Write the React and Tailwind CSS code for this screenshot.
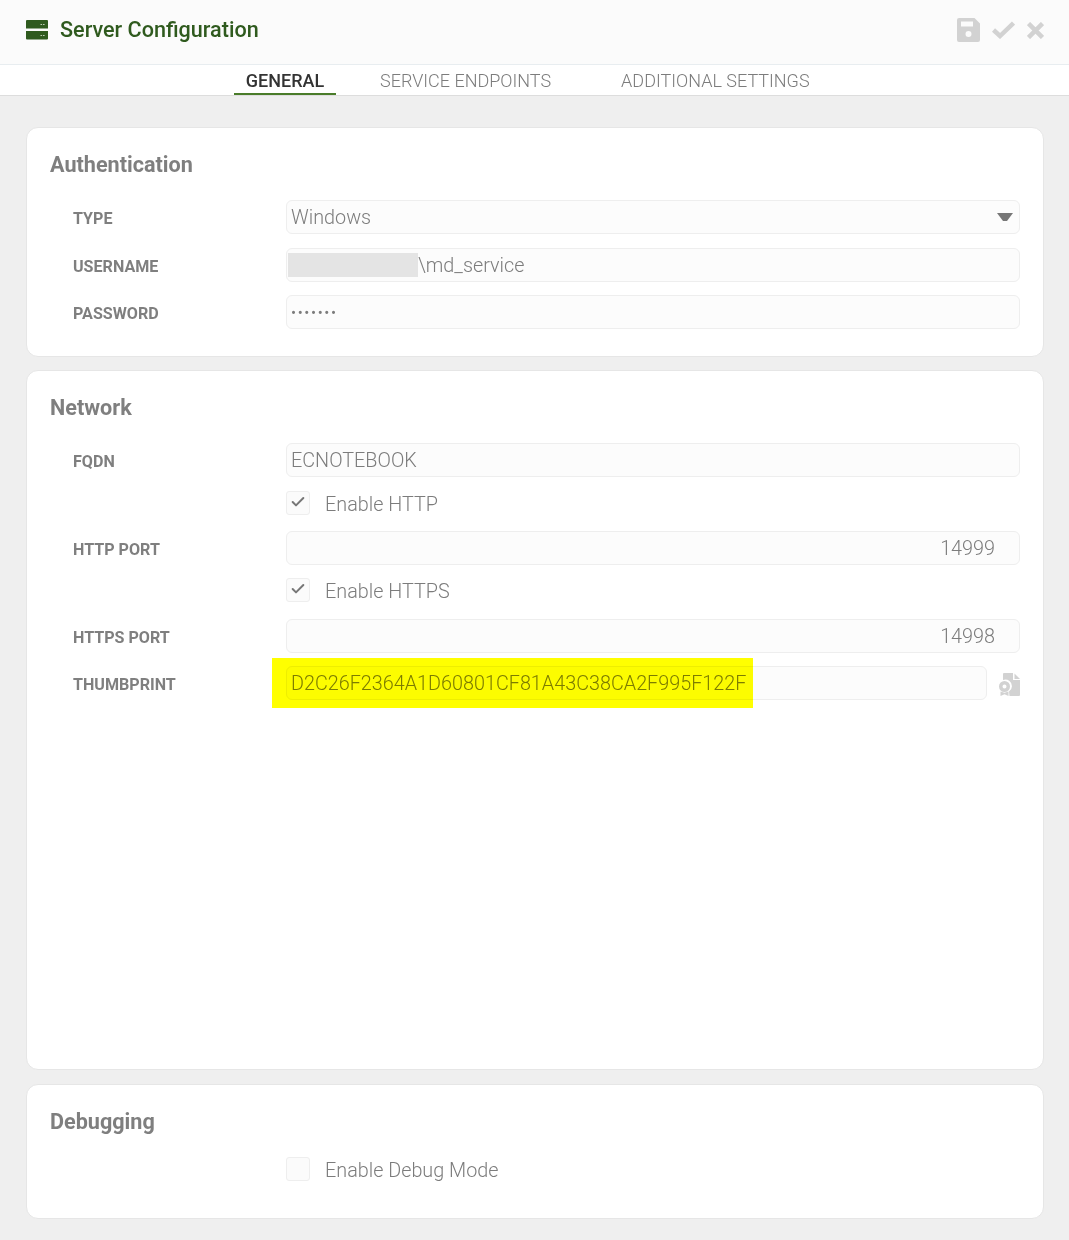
import React from "react";
import { Check } from "lucide-react";

function ServerIcon() {
  return (
    <svg width="22" height="20" viewBox="0 0 22 20" className="block">
      <path fill="#2f5a1e" d="M1 0h20a1 1 0 0 1 1 1v7.500H0V1a1 1 0 0 1 1-1zM0 11h22v7.500a1 1 0 0 1-1 1H1a1 1 0 0 1-1-1z" />
      <rect x="14.500" y="4" width="1.600" height="1" fill="#b9c9b0" />
      <rect x="17" y="4" width="1.600" height="1" fill="#b9c9b0" />
      <rect x="14.500" y="15" width="1.600" height="1" fill="#b9c9b0" />
      <rect x="17" y="15" width="1.600" height="1" fill="#b9c9b0" />
    </svg>
  );
}

function SaveIcon() {
  return (
    <svg width="23" height="24" viewBox="0 0 23 24" className="block">
      <path
        fill="#d2d2d2"
        fillRule="evenodd"
        d="M2 0h15.500L23 5.500V22a2 2 0 0 1-2 2H2a2 2 0 0 1-2-2V2a2 2 0 0 1 2-2zM4 3.500V8.500h12V3.500zM11.500 13a3 3 0 1 0 0 6 3 3 0 0 0 0-6z"
      />
    </svg>
  );
}

function OkIcon() {
  return (
    <svg width="23" height="18" viewBox="0 0 23 18" className="block">
      <path fill="none" stroke="#d2d2d2" strokeWidth="4.500" d="M1.500 9l6.500 6L21.500 2" />
    </svg>
  );
}

function CloseIcon() {
  return (
    <svg width="17" height="17" viewBox="0 0 17 17" className="block">
      <path fill="none" stroke="#d2d2d2" strokeWidth="4.500" d="M1.500 1.500l14 14M15.500 1.500l-14 14" />
    </svg>
  );
}

function CertIcon() {
  return (
    <svg width="22" height="23" viewBox="0 0 22 23" className="block">
      <path fill="#d2d2d2" d="M6 0h9v7h7v15a1 1 0 0 1-1 1H11.500l-.5-4.500a6.500 6.500 0 0 0 .5-10.500A7 7 0 0 0 5 7V1a1 1 0 0 1 1-1zM16.500 0.500L22 6h-5.500z" />
      <path fill="#d2d2d2" fillRule="evenodd" d="M6.500 8a5.500 5.500 0 1 1 0 11 5.500 5.500 0 0 1 0-11zm0 3.500a2 2 0 1 0 0 4 2 2 0 0 0 0-4zM2.500 18.500v4.500l4-1.800 4 1.800v-4.500l-4 1.300z" />
    </svg>
  );
}

function Field({ children, className = "" }) {
  return (
    <div className={`h-[34px] flex items-center px-[4px] pt-[2px] border border-[#eeeeee] rounded-[6px] bg-[#fcfcfc] text-[19.8px] font-light text-[#7c7c7c] ${className}`}>
      {children}
    </div>
  );
}

function Row({ label, children, className = "" }) {
  return (
    <div className={`flex items-center pl-[46px] pr-[23px] ${className}`}>
      <div className="w-[213px] shrink-0 text-[16.1px] font-bold text-[#7f7f7f] pt-[4px]">{label}</div>
      <div className="flex-1 min-w-0">{children}</div>
    </div>
  );
}

function CheckRow({ checked, label, className = "" }) {
  return (
    <div className={`h-[24px] flex items-center pl-[259px] ${className}`}>
      <div className="w-[24px] h-[24px] flex items-center justify-center rounded-[3px] border border-[#eeeeee] bg-[#fbfbfb]">
        {checked && <Check size={16} strokeWidth={3} className="text-[#777777] mb-[2px]" />}
      </div>
      <span className="ml-[15px] pt-[4px] text-[19.8px] font-light text-[#7c7c7c]">{label}</span>
    </div>
  );
}

function Card({ title, className = "", children }) {
  return (
    <section className={`bg-white border border-[#e6e6e6] rounded-[12px] ${className}`}>
      <h2 className="pl-[23px] pt-[22px] h-[72px] text-[21.6px] leading-[30px] font-bold text-[#7f7f7f]">{title}</h2>
      {children}
    </section>
  );
}

export default function App() {
  return (
    <div className="relative w-[1069px] h-[1240px] overflow-hidden bg-[#efefef] font-['Roboto',sans-serif]">
      <header className="h-[65px] flex items-center justify-between pl-[26px] pr-[25px] pb-[4px] bg-[#fbfbfb] border-b border-[#e8edf0]">
        <div className="flex items-center gap-[12px]">
          <ServerIcon />
          <span className="text-[21.6px] font-medium text-[#2f5a1e]">Server Configuration</span>
        </div>
        <div className="flex items-center">
          <SaveIcon />
          <div className="ml-[12px]"><OkIcon /></div>
          <div className="ml-[12px]"><CloseIcon /></div>
        </div>
      </header>

      <nav className="h-[31px] bg-white border-b border-[#dddddd] text-[18px] font-normal text-[#7c7c7c]">
        <div className="flex h-full pl-[234px]">
          <div className="w-[102px] h-[30px] text-center leading-[31px] font-medium text-[#333333] border-b-[2px] border-[#4a7c2a]">GENERAL</div>
          <div className="ml-[44px] leading-[31px] font-light">SERVICE ENDPOINTS</div>
          <div className="ml-[70px] leading-[31px] font-light">ADDITIONAL SETTINGS</div>
        </div>
      </nav>

      <main className="pl-[26px] pr-[25px] pt-[31px]">
        <Card title="Authentication" className="h-[230px]">
          <Row label="TYPE">
            <Field className="justify-between">
              <span>Windows</span>
              <svg width="16" height="9" viewBox="0 0 16 9" className="mr-[2px] -mt-[2px]"><path fill="#777777" d="M0 0h16L10 8H6z" /></svg>
            </Field>
          </Row>
          <Row label="USERNAME" className="mt-[14px]">
            <Field className="!pl-[1px]">
              <span className="w-[130px] h-[24px] -mt-[2px] bg-[#e4e4e4]" />
              <span>\md_service</span>
            </Field>
          </Row>
          <Row label="PASSWORD" className="mt-[13px]">
            <Field className="!text-[15px] !font-normal tracking-[1.6px]">•••••••</Field>
          </Row>
        </Card>

        <Card title="Network" className="h-[700px] mt-[13px]">
          <Row label="FQDN">
            <Field>ECNOTEBOOK</Field>
          </Row>
          <CheckRow checked label="Enable HTTP" className="mt-[14px]" />
          <Row label="HTTP PORT" className="mt-[16px]">
            <Field className="justify-end pr-[24px]">14999</Field>
          </Row>
          <CheckRow checked label="Enable HTTPS" className="mt-[13px]" />
          <Row label="HTTPS PORT" className="mt-[17px]">
            <Field className="justify-end pr-[24px]">14998</Field>
          </Row>
          <Row label="THUMBPRINT" className="mt-[13px]">
            <div className="flex items-center">
              <Field className="flex-1">D2C26F2364A1D60801CF81A43C38CA2F995F122F</Field>
              <div className="ml-[11px] mt-[2px]"><CertIcon /></div>
            </div>
          </Row>
        </Card>

        <Card title="Debugging" className="h-[135px] mt-[14px]">
          <CheckRow label="Enable Debug Mode" />
        </Card>
      </main>

      <div className="absolute left-[272px] top-[658px] w-[481px] h-[50px] bg-[#ffff00] mix-blend-multiply" />
    </div>
  );
}
